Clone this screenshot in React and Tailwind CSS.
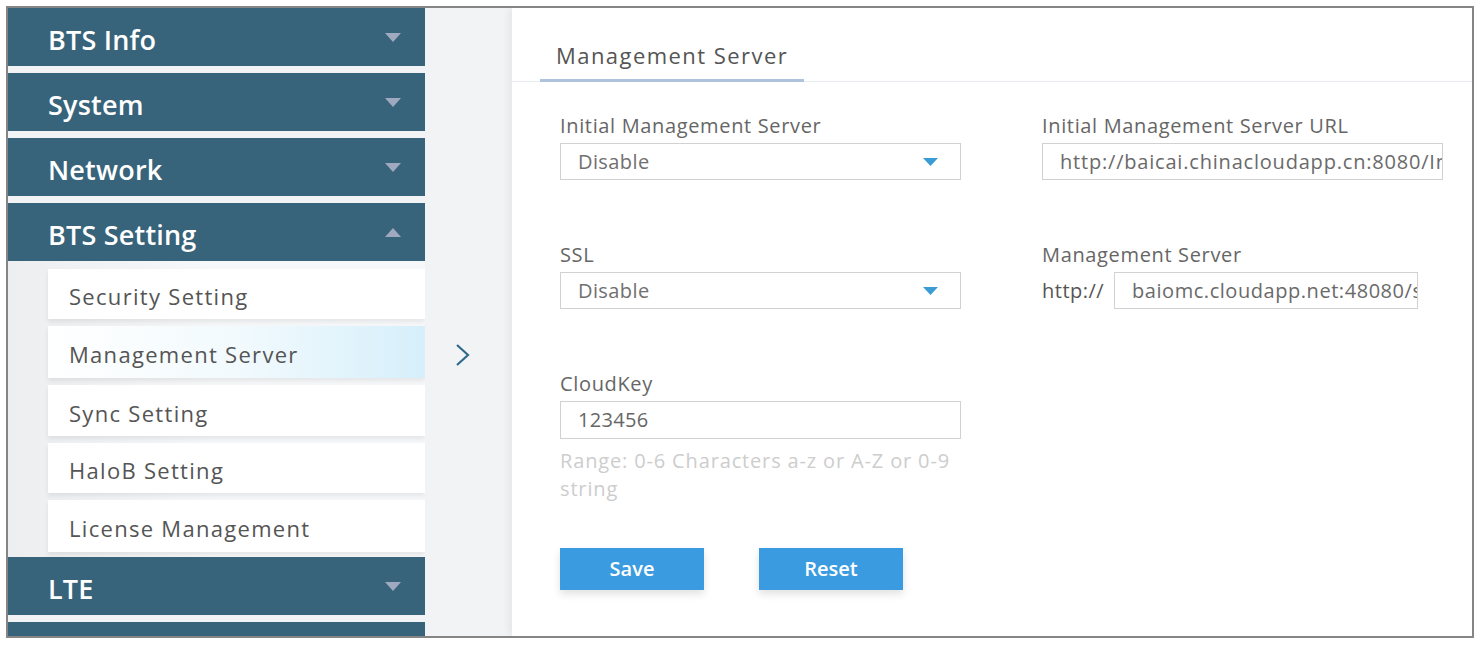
import React from "react";

const font = { fontFamily: '"Open Sans", "Noto Sans", Arial, sans-serif' };

function Caret({ up }) {
  return (
    <svg width="16" height="9" viewBox="0 0 16 9" className="shrink-0">
      {up ? (
        <polygon points="0,9 16,9 8,0" fill="#9fa9bf" />
      ) : (
        <polygon points="0,0 16,0 8,9" fill="#9fa9bf" />
      )}
    </svg>
  );
}

function Header({ title, up }) {
  return (
    <div className="h-[58px] shrink-0 bg-[#37647a] flex items-center justify-between pl-[40px] pr-[24px]">
      <span className="pt-[7px] text-[27px] font-semibold text-white tracking-[0.2px]">{title}</span>
      <Caret up={up} />
    </div>
  );
}

function SubItem({ label, active, h }) {
  return (
    <div
      className={
        "shrink-0 flex items-center pl-[21px] pt-[5px] text-[22px] tracking-[1.3px] text-[#555] shadow-[0_3px_5px_rgba(0,0,0,0.08)] " +
        (active
          ? "bg-gradient-to-r from-white via-[#f2fafd] to-[#d6effb]"
          : "bg-white")
      }
      style={{ height: h }}
    >
      {label}
    </div>
  );
}

function Select({ value }) {
  return (
    <div className="h-[37px] border border-[#d2d2d2] bg-white flex items-center justify-between pl-[17px] pr-[22px]">
      <span className="text-[20px] text-[#707070] tracking-[0.4px]">{value}</span>
      <svg width="15" height="8" viewBox="0 0 15 8">
        <polygon points="0,0 15,0 7.5,8" fill="#3a9bd5" />
      </svg>
    </div>
  );
}

function Label({ children }) {
  return <div className="h-[24px] leading-[24px] text-[20px] text-[#666] tracking-[0.65px] whitespace-nowrap">{children}</div>;
}

export default function App() {
  return (
    <div className="w-[1482px] h-[649px] bg-white p-[6px]" style={font}>
      <div className="w-[1468px] h-[632px] border-2 border-[#858585] flex overflow-hidden bg-[#f3f4f6]">
        {/* Sidebar */}
        <div className="w-[417px] shrink-0 flex flex-col bg-[#f1f3f5] overflow-hidden">
          <Header title="BTS Info" />
          <div className="h-[7px] shrink-0" />
          <Header title="System" />
          <div className="h-[7px] shrink-0" />
          <Header title="Network" />
          <div className="h-[7px] shrink-0" />
          <Header title="BTS Setting" up />
          <div className="shrink-0 flex flex-col gap-[7px] pl-[40px] pt-[8px] pb-[5px] bg-gradient-to-r from-[#eceef0] via-[#f7f8f9] to-[#f7f8f9]">
            <SubItem label="Security Setting" h={50} />
            <SubItem label="Management Server" active h={52} />
            <SubItem label="Sync Setting" h={51} />
            <SubItem label="HaloB Setting" h={50} />
            <SubItem label="License Management" h={52} />
          </div>
          <Header title="LTE" />
          <div className="h-[7px] shrink-0" />
          <div className="h-[20px] shrink-0 bg-[#37647a]" />
        </div>

        {/* Middle gutter with chevron */}
        <div className="w-[87px] shrink-0 bg-[#f2f3f5] flex flex-col">
          <div className="h-[335px]" />
          <div className="flex pl-[30px]">
            <svg width="16" height="24" viewBox="0 0 16 24">
              <polyline points="2,2 13,12 2,22" fill="none" stroke="#2f6a8a" strokeWidth="2.2" />
            </svg>
          </div>
        </div>

        {/* Main panel */}
        <div className="flex-1 bg-white shadow-[-3px_0_8px_rgba(0,0,0,0.06)] flex flex-col">
          <div className="h-[74px] border-b border-[#e8ebef] flex items-end pl-[28px]">
            <div className="px-[16px] h-[40px] text-[22px] text-[#555] border-b-[3px] border-[#aec3db] mb-[-1px] leading-[26px] tracking-[1.45px]">
              Management Server
            </div>
          </div>

          <div className="pl-[48px] pt-[32px] grid grid-cols-[401px_401px] gap-x-[81px] gap-y-[63px]">
            <div className="flex flex-col gap-[5px]">
              <Label>Initial Management Server</Label>
              <Select value="Disable" />
            </div>
            <div className="flex flex-col gap-[5px]">
              <Label>Initial Management Server URL</Label>
              <div className="h-[37px] border border-[#d2d2d2] flex items-center pl-[17px] overflow-hidden whitespace-nowrap">
                <span className="text-[20px] text-[#6a6a6a] tracking-[0.8px]">http://baicai.chinacloudapp.cn:8080/In</span>
              </div>
            </div>

            <div className="flex flex-col gap-[5px]">
              <Label>SSL</Label>
              <Select value="Disable" />
            </div>
            <div className="flex flex-col gap-[5px]">
              <Label>Management Server</Label>
              <div className="flex items-center h-[37px]">
                <span className="w-[72px] text-[20px] text-[#555] tracking-[0.5px]">http://</span>
                <div className="w-[304px] h-[37px] border border-[#d2d2d2] flex items-center pl-[17px] overflow-hidden whitespace-nowrap">
                  <span className="text-[20px] text-[#6a6a6a] tracking-[0.55px]">baiomc.cloudapp.net:48080/s</span>
                </div>
              </div>
            </div>

            <div className="flex flex-col">
              <div className="flex flex-col gap-[5px]">
                <Label>CloudKey</Label>
                <div className="h-[38px] border border-[#d2d2d2] flex items-center pl-[17px]">
                  <span className="text-[20px] text-[#666] tracking-[0.3px]">123456</span>
                </div>
              </div>
              <div className="mt-[8px] text-[20px] leading-[28px] text-[#cdcdcd] tracking-[0.85px]">
                Range: 0-6 Characters a-z or A-Z or 0-9 string
              </div>
              <div className="mt-[45px] flex gap-[55px]">
                <button className="w-[144px] h-[42px] bg-[#3b9be0] text-white text-[20px] font-semibold shadow-[0_4px_8px_rgba(0,0,0,0.12)]">
                  Save
                </button>
                <button className="w-[144px] h-[42px] bg-[#3b9be0] text-white text-[20px] font-semibold shadow-[0_4px_8px_rgba(0,0,0,0.12)]">
                  Reset
                </button>
              </div>
            </div>
          </div>
        </div>
      </div>
    </div>
  );
}
